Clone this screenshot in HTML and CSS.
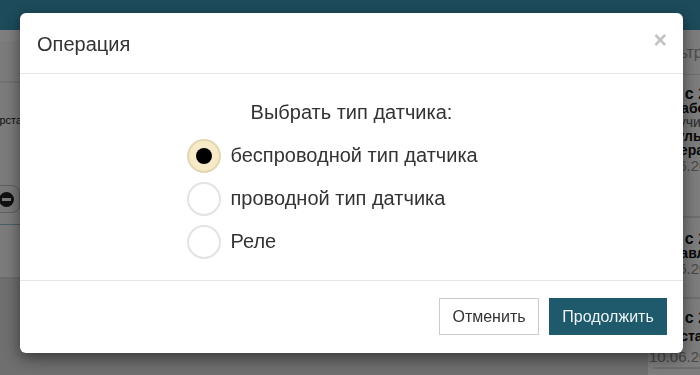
FILE: index.html
```html
<!DOCTYPE html>
<html lang="ru">
  <head>
    <meta charset="utf-8">
    <title>Операция</title>
    <link rel="stylesheet" href="styles.css">
  </head>
  <body>

    <div class="page">
      <div class="topbar"></div>
      <div class="main">
        <div class="content">
          <div class="subbar"></div>
          <div class="toolbar"></div>
          <div class="filter_row"><span class="small">Верстак</span></div>
          <div class="pill_row">
            <span class="pill"><i class="minus"></i></span>
          </div>
          <div class="teal_row"></div>
          <div class="dark_area"></div>
        </div>

        <div class="feed">
          <div class="feed_search">Фильтр</div>
          <div class="item first">
            <p class="title">Акт с 24.05</p>
            <p class="line bold">Обработка</p>
            <p class="line muted">Получим</p>
            <p class="line bold">Результаты</p>
            <p class="line bold">Камера:</p>
            <p class="date">10.06.2019</p>
          </div>
          <div class="item second">
            <p class="title">Акт с 21.05</p>
            <p class="line bold">Добавлено</p>
            <p class="date">10.06.2019</p>
          </div>
          <div class="item third">
            <p class="title">Акт с 20.05</p>
            <p class="line bold">Подстанция</p>
            <p class="date">10.06.2019</p>
          </div>
        </div>
      </div>
    </div>

    <div class="backdrop"></div>

    <div class="modal">
      <div class="modal_header">
        <h4>Операция</h4>
        <span class="close">&times;</span>
      </div>

      <div class="modal_body">
        <p class="question">Выбрать тип датчика:</p>
        <div class="options">
          <label class="option"><span class="radio checked"></span>беспроводной тип датчика</label>
          <label class="option"><span class="radio"></span>проводной тип датчика</label>
          <label class="option"><span class="radio"></span>Реле</label>
        </div>
      </div>

      <div class="modal_footer">
        <button class="btn btn_default">Отменить</button>
        <button class="btn btn_primary">Продолжить</button>
      </div>
    </div>

  </body>
</html>
```

FILE: styles.css
```css
    body{
      margin: 0;
      font-family: "Liberation Sans", Arial, sans-serif;
      color: #333;
      overflow: hidden;
    }

    .page{
      width: 700px;
      height: 375px;
      background: #f6f6f6;
    }

    .topbar{
      height: 30px;
      background: #3a96b6;
    }

    .main{
      display: flex;
      height: 345px;
    }

    .content{
      width: 648px;
      display: flex;
      flex-direction: column;
    }

    .subbar{
      height: 11px;
      background: #fdfdfd;
    }

    .toolbar{
      height: 40px;
      border-bottom: 2px solid #e2e2e2;
    }

    .filter_row{
      height: 100px;
      padding-top: 27px;
      box-sizing: border-box;
      margin-left: -14px;
    }

    .small{
      font-size: 11px;
      color: #222;
    }

    .pill_row{
      height: 42px;
      border-bottom: 1px solid #8fc1cc;
      padding-top: 2px;
      box-sizing: border-box;
    }

    .pill{
      display: inline-flex;
      align-items: center;
      justify-content: flex-end;
      width: 40px;
      height: 28px;
      margin-left: -20px;
      border: 1px solid #bcbcbc;
      border-radius: 8px;
      background: #f2f2f2;
      padding-right: 5px;
      box-sizing: border-box;
    }

    .minus{
      width: 15px;
      height: 15px;
      border-radius: 50%;
      background: #222;
      position: relative;
    }

    .minus:after{
      content: '';
      position: absolute;
      left: 3px;
      right: 3px;
      top: 6px;
      height: 3px;
      background: #f2f2f2;
    }

    .teal_row{
      height: 52px;
      border-bottom: 2px solid #d8d8d8;
    }

    .dark_area{
      flex: 1;
      background: #dedede;
    }

    .feed{
      flex: 1;
      padding-left: 5px;
      background: #fafafa;
      white-space: nowrap;
      overflow: hidden;
    }

    .feed_search{
      height: 45px;
      padding-top: 14px;
      box-sizing: border-box;
      font-size: 16px;
      color: #9a9a9a;
      border-bottom: 1px solid #ddd;
      margin-left: -4px;
    }

    .item{
      border-bottom: 2px solid #ddd;
      box-sizing: border-box;
    }

    .first{
      height: 143px;
      padding-top: 11px;
    }

    .second{
      height: 81px;
      padding-top: 13px;
    }

    .third{
      padding-top: 11px;
    }

    .item p{
      margin: 0;
    }

    .title{
      font-size: 16px;
      font-weight: bold;
      color: #111;
      line-height: 15px;
    }

    .line{
      font-size: 14px;
      line-height: 14px;
      color: #111;
    }

    .third .line{
      line-height: 22px;
    }

    .bold{
      font-weight: bold;
    }

    .muted{
      color: #555;
    }

    .date{
      font-size: 15px;
      line-height: 18px;
      color: #909090;
      margin-left: -4px !important;
    }

    .third .date{
      line-height: 20px;
    }

    .backdrop{
      position: fixed;
      top: 0;
      left: 0;
      right: 0;
      bottom: 0;
      background: rgba(0,0,0,0.5);
    }

    .modal{
      position: fixed;
      top: 13px;
      left: 20px;
      width: 663px;
      height: 340px;
      background: #fff;
      border-radius: 6px;
      box-shadow: 0 5px 15px rgba(0,0,0,0.5);
      display: flex;
      flex-direction: column;
    }

    .modal_header{
      height: 61px;
      border-bottom: 1px solid #e5e5e5;
      display: flex;
      align-items: center;
      justify-content: space-between;
      padding: 0 17px;
      box-sizing: border-box;
    }

    .modal_header h4{
      margin: 0;
      font-size: 20px;
      font-weight: normal;
      color: #333;
      padding-top: 2px;
    }

    .close{
      font-size: 23px;
      font-weight: bold;
      color: #c2c2c2;
      margin-top: -5px;
      margin-right: -1px;
    }

    .modal_body{
      height: 207px;
      padding-top: 26px;
      box-sizing: border-box;
      border-bottom: 1px solid #e5e5e5;
    }

    .question{
      margin: 0 0 10px 0;
      font-size: 20px;
      line-height: 24px;
      text-align: center;
      color: #333;
    }

    .options{
      width: 330px;
      margin: 0 auto;
    }

    .option{
      display: flex;
      align-items: center;
      gap: 10px;
      height: 43px;
      font-size: 20px;
      color: #333;
    }

    .radio{
      width: 34px;
      height: 34px;
      flex-shrink: 0;
      border-radius: 50%;
      border: 2px solid #e3e3e3;
      box-sizing: border-box;
      background: #fff;
      display: flex;
      align-items: center;
      justify-content: center;
    }

    .radio.checked{
      background: #f6eac8;
      border-color: #e3d7b3;
    }

    .radio.checked:after{
      content: '';
      width: 16px;
      height: 16px;
      border-radius: 50%;
      background: #000;
    }

    .modal_footer{
      flex: 1;
      display: flex;
      justify-content: flex-end;
      align-items: flex-start;
      gap: 10px;
      padding: 17px 16px 0 0;
    }

    .btn{
      height: 37px;
      font-family: "Liberation Sans", Arial, sans-serif;
      font-size: 16px;
      border: 1px solid #ccc;
      cursor: pointer;
    }

    .btn_default{
      width: 100px;
      background: #fff;
      color: #333;
    }

    .btn_primary{
      width: 118px;
      background: #1e5a6b;
      border-color: #1e5a6b;
      color: #eef3f5;
    }
```
